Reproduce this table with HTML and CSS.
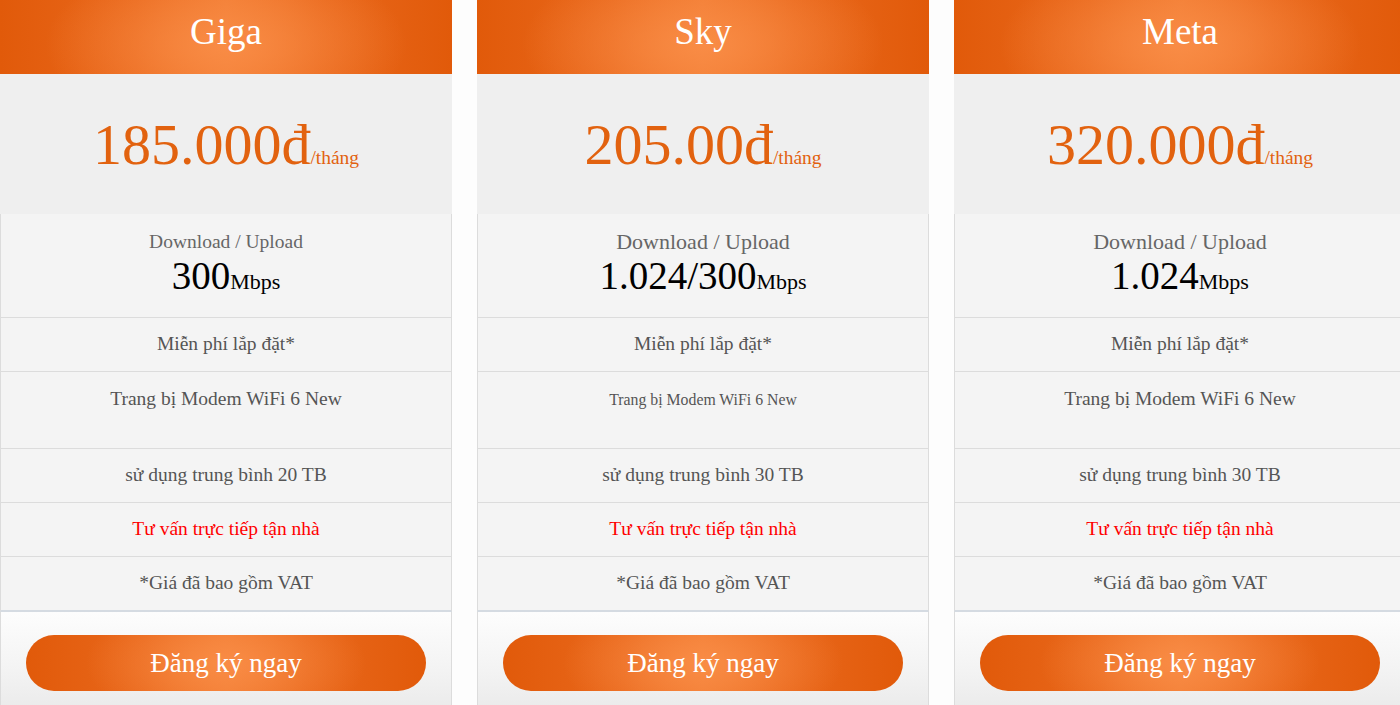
FILE: index.html
```html
<!DOCTYPE html>
<html lang="vi">
<head>
<meta charset="utf-8">
<title>Bảng giá</title>
<link rel="stylesheet" href="styles.css">
</head>
<body>
<div class="plans">
  <div class="card">
    <div class="card-head">Giga</div>
    <div class="price"><span class="amount">185.000đ</span><span class="per">/tháng</span></div>
    <ul class="features">
      <li class="speed"><div class="label small">Download / Upload</div><div class="rate">300<span class="unit">Mbps</span></div></li>
      <li>Miễn phí lắp đặt*</li>
      <li class="tall">Trang bị Modem WiFi 6 New</li>
      <li>sử dụng trung bình 20 TB</li>
      <li class="red">Tư vấn trực tiếp tận nhà</li>
      <li>*Giá đã bao gồm VAT</li>
    </ul>
    <div class="card-foot"><a class="btn" href="#">Đăng ký ngay</a></div>
  </div>
  <div class="card">
    <div class="card-head">Sky</div>
    <div class="price"><span class="amount">205.00đ</span><span class="per">/tháng</span></div>
    <ul class="features">
      <li class="speed"><div class="label">Download / Upload</div><div class="rate">1.024/300<span class="unit">Mbps</span></div></li>
      <li>Miễn phí lắp đặt*</li>
      <li class="tall"><span class="tiny">Trang bị Modem WiFi 6 New</span></li>
      <li>sử dụng trung bình 30 TB</li>
      <li class="red">Tư vấn trực tiếp tận nhà</li>
      <li>*Giá đã bao gồm VAT</li>
    </ul>
    <div class="card-foot"><a class="btn" href="#">Đăng ký ngay</a></div>
  </div>
  <div class="card">
    <div class="card-head">Meta</div>
    <div class="price"><span class="amount">320.000đ</span><span class="per">/tháng</span></div>
    <ul class="features">
      <li class="speed"><div class="label">Download / Upload</div><div class="rate">1.024<span class="unit">Mbps</span></div></li>
      <li>Miễn phí lắp đặt*</li>
      <li class="tall">Trang bị Modem WiFi 6 New</li>
      <li>sử dụng trung bình 30 TB</li>
      <li class="red">Tư vấn trực tiếp tận nhà</li>
      <li>*Giá đã bao gồm VAT</li>
    </ul>
    <div class="card-foot"><a class="btn" href="#">Đăng ký ngay</a></div>
  </div>
</div>
</body>
</html>
```
FILE: styles.css
```css
html, body {
  margin: 0;
  padding: 0;
  background: #fdfdfd;
  overflow: hidden;
}
body {
  font-family: "Liberation Serif", "Times New Roman", serif;
  width: 1400px;
  height: 705px;
}
.plans {
  display: flex;
  gap: 25px;
  width: 1420px;
}
.card {
  flex: 0 0 452px;
  display: flex;
  flex-direction: column;
  text-align: center;
}
.card-head {
  height: 74px;
  line-height: 64px;
  font-size: 37px;
  color: #fff;
  background:
    radial-gradient(ellipse 40% 120% at 50% 60%, rgba(250,142,72,0.9) 0%, rgba(250,142,72,0) 100%),
    linear-gradient(to right, #e15a0a 0%, #e9681c 30%, #f07a30 50%, #e9681c 70%, #e15a0a 100%);
}
.price {
  height: 140px;
  box-sizing: border-box;
  padding-top: 36px;
  background: #efefef;
  color: #e2620f;
  white-space: nowrap;
}
.amount {
  font-size: 58px;
  line-height: 70px;
}
.per {
  font-size: 19.5px;
}
.features {
  list-style: none;
  margin: 0;
  padding: 0;
  background: #f4f4f4;
  border-left: 1px solid #dcdcdc;
  border-right: 1px solid #dcdcdc;
  border-bottom: 2px solid #d5dbe2;
}
.features li {
  padding: 15px 0 16px;
  line-height: 22px;
  font-size: 19.5px;
  color: #555;
  border-bottom: 1px solid #dcdcdc;
}
.features li:last-child {
  border-bottom: none;
  padding-bottom: 16px;
}
.features li.tall {
  min-height: 44px;
  padding-top: 16px;
}
.features li.red {
  color: #f00;
}
.features li.speed {
  padding: 16px 0 22px;
}
.label {
  font-size: 22px;
  line-height: 24px;
  color: #666;
}
.label.small {
  font-size: 19.5px;
}
.rate {
  height: 38px;
  margin-top: 3px;
  font-size: 39px;
  line-height: 38px;
  color: #000;
}
.unit {
  font-size: 22px;
  line-height: 1;
}
.tiny {
  font-size: 15.8px;
}
.card-foot {
  flex: 0 0 auto;
  height: 95px;
  padding: 23px 25px 0;
  border-left: 1px solid #dcdcdc;
  border-right: 1px solid #dcdcdc;
  background: linear-gradient(to bottom, #fdfdfd 0%, #f3f3f3 50%, #e6e6e6 100%);
}
.btn {
  display: block;
  height: 56px;
  line-height: 56px;
  border-radius: 28px;
  font-size: 27px;
  color: #fff;
  text-decoration: none;
  background:
    radial-gradient(ellipse 35% 120% at 50% 50%, rgba(250,142,72,0.9) 0%, rgba(250,142,72,0) 100%),
    linear-gradient(to right, #e15a0a 0%, #e9681c 30%, #f07a30 50%, #e9681c 70%, #e15a0a 100%);
}
```
